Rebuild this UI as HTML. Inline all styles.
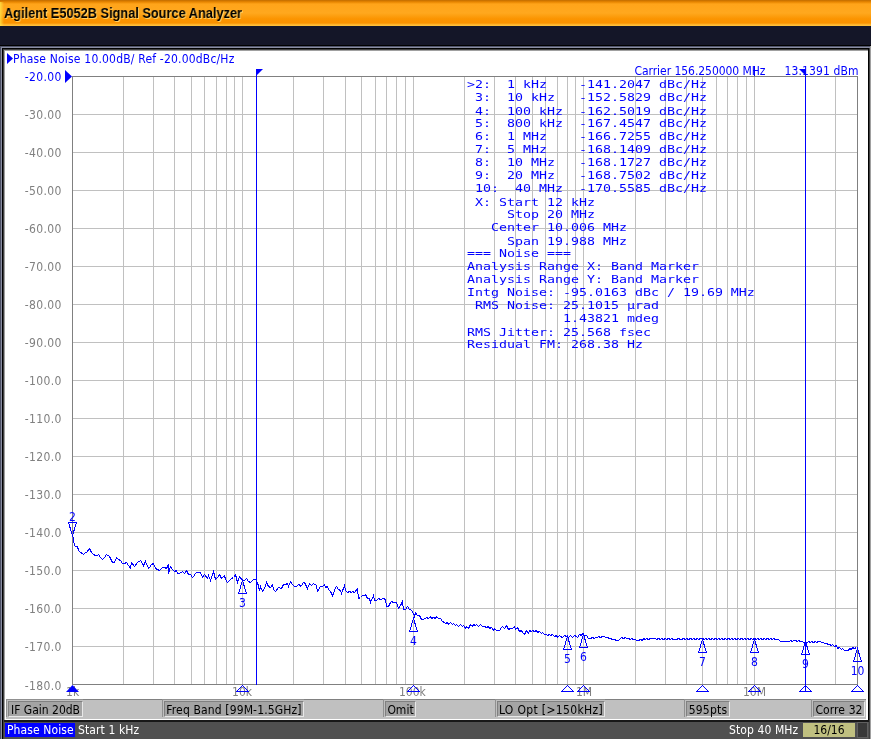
<!DOCTYPE html><html><head><meta charset="utf-8"><title>Agilent E5052B Signal Source Analyzer</title><style>
html,body{margin:0;padding:0}
body{width:871px;height:739px;position:relative;overflow:hidden;background:#fff;font-family:"DejaVu Sans Condensed","Liberation Sans",sans-serif;font-size:12px}
.a{position:absolute}
.g{will-change:transform}
#title{left:0;top:0;width:871px;height:26px;background:linear-gradient(to bottom,#c06c00 0px,#e88600 2px,#ffa41a 4px,#ffa81e 13px,#fb9400 19px,#fa9200 23px,#ffbe38 25px,#ffbe38 26px)}
#title span{will-change:transform;position:absolute;left:4px;top:5px;font:bold 14px/16px "Liberation Sans",sans-serif;transform:scaleX(0.912);transform-origin:0 0;color:#000;white-space:pre;text-shadow:1px 1px 0 rgba(255,224,128,.8)}
#title i{position:absolute;left:0;top:2px;width:4px;height:24px;background:linear-gradient(to right,rgba(255,226,70,.85),rgba(255,226,70,0))}
#navy{left:0;top:26px;width:871px;height:19px;background:#141628}
.sb{font-size:12px;color:#000;white-space:pre}
.box{position:absolute;top:701px;height:14px;line-height:16px;background:#a4a4a4;border-top:1px solid #808080;border-left:1px solid #808080;border-bottom:1px solid #e8e8e8;border-right:1px solid #e8e8e8;box-shadow:0 0 0 1px #c0c0c0,-1px -1px 0 1px #909090;text-align:center;font-size:12px;white-space:pre}
pre{margin:0;position:absolute;left:467px;top:77.7px;font:13.29px/15.294px "DejaVu Sans Mono","Liberation Mono",monospace;transform:scaleY(0.85);transform-origin:0 0;color:#0000ff;white-space:pre}
text{font-family:"DejaVu Sans Condensed","Liberation Sans",sans-serif;font-size:12px}

</style></head><body>
<div class="a" id="title"><i></i><span>Agilent E5052B Signal Source Analyzer</span></div>
<div class="a" id="navy"></div>
<div class="a" style="left:0px;top:45px;width:871px;height:1px;background:#000"></div>
<div class="a" style="left:0px;top:46px;width:871px;height:1px;background:#50546a"></div>
<div class="a" style="left:0px;top:47px;width:871px;height:1px;background:#8a8ea2"></div>
<div class="a" style="left:0px;top:46px;width:1px;height:693px;background:#4c5064"></div>
<div class="a" style="left:1px;top:47px;width:1px;height:692px;background:#8a8ea2"></div>
<div class="a" style="left:2px;top:48px;width:868px;height:2px;background:#000"></div>
<div class="a" style="left:2px;top:48px;width:2px;height:691px;background:#000"></div>
<div class="a" style="left:3px;top:49px;width:866px;height:1px;background:#404040"></div>
<div class="a" style="left:3px;top:49px;width:1px;height:690px;background:#404040"></div>
<div class="a" style="left:4px;top:50px;width:865px;height:1px;background:#a0a0a0"></div>
<div class="a" style="left:4px;top:50px;width:1px;height:689px;background:#a0a0a0"></div>
<div class="a" style="left:868px;top:48px;width:1px;height:691px;background:#000"></div>
<div class="a" style="left:869px;top:48px;width:1px;height:691px;background:#404040"></div>
<div class="a" style="left:870px;top:46px;width:1px;height:693px;background:#a0a0a0"></div>
<div class="a" style="left:6px;top:699px;width:860px;height:1px;background:#808080"></div>
<div class="a" style="left:6px;top:700px;width:860px;height:19px;background:#c0c0c0"></div>
<div class="a" style="left:4px;top:720px;width:865px;height:2px;background:#181818"></div>
<div class="a" style="left:4px;top:722px;width:865px;height:17px;background:#505050"></div>
<div class="a" style="left:5px;top:723px;width:70px;height:14px;background:#0000ff"></div>
<div class="a g" style="left:7px;top:723px;height:15px;line-height:15px;color:#fff;font-size:12px;white-space:pre;letter-spacing:0.1px">Phase Noise</div>
<div class="a g" style="left:78px;top:723px;height:15px;line-height:15px;color:#fff;font-size:12px;white-space:pre;letter-spacing:0.1px">Start 1 kHz</div>
<div class="a g" style="right:73px;top:723px;height:15px;line-height:15px;color:#fff;font-size:12px;white-space:pre;letter-spacing:0.1px">Stop 40 MHz</div>
<div class="a" style="left:803px;top:723px;width:52px;height:14px;background:#c0c080"></div>
<div class="a g" style="left:803px;width:52px;text-align:center;top:723px;height:15px;line-height:15px;color:#000;font-size:12px;white-space:pre">16/16</div>
<div class="a" style="left:857px;top:722px;width:11px;height:16px;background:#606060"></div>
<div class="a" style="left:858px;top:723px;width:9px;height:14px;background:#383838"></div>
<div class="box" style="left:8px;width:73px"><span class="g" style="display:block;letter-spacing:0px">IF Gain 20dB</span></div>
<div class="box" style="left:164px;width:138px"><span class="g" style="display:block;letter-spacing:0.14px">Freq Band [99M-1.5GHz]</span></div>
<div class="box" style="left:385px;width:29px"><span class="g" style="display:block;letter-spacing:0px">Omit</span></div>
<div class="box" style="left:497px;width:106px"><span class="g" style="display:block;letter-spacing:0.35px">LO Opt [>150kHz]</span></div>
<div class="box" style="left:686px;width:42px"><span class="g" style="display:block;letter-spacing:0.2px">595pts</span></div>
<div class="box" style="left:813px;width:50px"><span class="g" style="display:block;letter-spacing:0.1px">Corre 32</span></div>
<svg class="a" style="left:0;top:0;will-change:transform" width="871" height="739" viewBox="0 0 871 739">
<g shape-rendering="crispEdges">
<rect x="123" y="76" width="1" height="608" fill="#c0c0c0"/>
<rect x="153" y="76" width="1" height="608" fill="#c0c0c0"/>
<rect x="174" y="76" width="1" height="608" fill="#c0c0c0"/>
<rect x="191" y="76" width="1" height="608" fill="#c0c0c0"/>
<rect x="204" y="76" width="1" height="608" fill="#c0c0c0"/>
<rect x="216" y="76" width="1" height="608" fill="#c0c0c0"/>
<rect x="226" y="76" width="1" height="608" fill="#c0c0c0"/>
<rect x="234" y="76" width="1" height="608" fill="#c0c0c0"/>
<rect x="242" y="76" width="1" height="608" fill="#c0c0c0"/>
<rect x="293" y="76" width="1" height="608" fill="#c0c0c0"/>
<rect x="323" y="76" width="1" height="608" fill="#c0c0c0"/>
<rect x="345" y="76" width="1" height="608" fill="#c0c0c0"/>
<rect x="361" y="76" width="1" height="608" fill="#c0c0c0"/>
<rect x="375" y="76" width="1" height="608" fill="#c0c0c0"/>
<rect x="386" y="76" width="1" height="608" fill="#c0c0c0"/>
<rect x="396" y="76" width="1" height="608" fill="#c0c0c0"/>
<rect x="405" y="76" width="1" height="608" fill="#c0c0c0"/>
<rect x="413" y="76" width="1" height="608" fill="#c0c0c0"/>
<rect x="464" y="76" width="1" height="608" fill="#c0c0c0"/>
<rect x="494" y="76" width="1" height="608" fill="#c0c0c0"/>
<rect x="515" y="76" width="1" height="608" fill="#c0c0c0"/>
<rect x="532" y="76" width="1" height="608" fill="#c0c0c0"/>
<rect x="545" y="76" width="1" height="608" fill="#c0c0c0"/>
<rect x="557" y="76" width="1" height="608" fill="#c0c0c0"/>
<rect x="567" y="76" width="1" height="608" fill="#c0c0c0"/>
<rect x="575" y="76" width="1" height="608" fill="#c0c0c0"/>
<rect x="583" y="76" width="1" height="608" fill="#c0c0c0"/>
<rect x="635" y="76" width="1" height="608" fill="#c0c0c0"/>
<rect x="665" y="76" width="1" height="608" fill="#c0c0c0"/>
<rect x="686" y="76" width="1" height="608" fill="#c0c0c0"/>
<rect x="702" y="76" width="1" height="608" fill="#c0c0c0"/>
<rect x="716" y="76" width="1" height="608" fill="#c0c0c0"/>
<rect x="727" y="76" width="1" height="608" fill="#c0c0c0"/>
<rect x="737" y="76" width="1" height="608" fill="#c0c0c0"/>
<rect x="746" y="76" width="1" height="608" fill="#c0c0c0"/>
<rect x="754" y="76" width="1" height="608" fill="#c0c0c0"/>
<rect x="805" y="76" width="1" height="608" fill="#c0c0c0"/>
<rect x="835" y="76" width="1" height="608" fill="#c0c0c0"/>
<rect x="72" y="114" width="785" height="1" fill="#c0c0c0"/>
<rect x="72" y="152" width="785" height="1" fill="#c0c0c0"/>
<rect x="72" y="190" width="785" height="1" fill="#c0c0c0"/>
<rect x="72" y="228" width="785" height="1" fill="#c0c0c0"/>
<rect x="72" y="266" width="785" height="1" fill="#c0c0c0"/>
<rect x="72" y="304" width="785" height="1" fill="#c0c0c0"/>
<rect x="72" y="342" width="785" height="1" fill="#c0c0c0"/>
<rect x="72" y="380" width="785" height="1" fill="#c0c0c0"/>
<rect x="72" y="418" width="785" height="1" fill="#c0c0c0"/>
<rect x="72" y="456" width="785" height="1" fill="#c0c0c0"/>
<rect x="72" y="494" width="785" height="1" fill="#c0c0c0"/>
<rect x="72" y="532" width="785" height="1" fill="#c0c0c0"/>
<rect x="72" y="570" width="785" height="1" fill="#c0c0c0"/>
<rect x="72" y="608" width="785" height="1" fill="#c0c0c0"/>
<rect x="72" y="646" width="785" height="1" fill="#c0c0c0"/>
<rect x="72" y="76" width="1" height="609" fill="#808080"/>
<rect x="857" y="76" width="1" height="609" fill="#808080"/>
<rect x="72" y="76" width="786" height="1" fill="#808080"/>
<rect x="72" y="684" width="786" height="1" fill="#808080"/>
</g>
<text x="61.7" y="81" text-anchor="end" fill="#0000ff" letter-spacing="0.35">-20.00</text>
<text x="61.7" y="119" text-anchor="end" fill="#808080" letter-spacing="0.35">-30.00</text>
<text x="61.7" y="157" text-anchor="end" fill="#808080" letter-spacing="0.35">-40.00</text>
<text x="61.7" y="195" text-anchor="end" fill="#808080" letter-spacing="0.35">-50.00</text>
<text x="61.7" y="233" text-anchor="end" fill="#808080" letter-spacing="0.35">-60.00</text>
<text x="61.7" y="271" text-anchor="end" fill="#808080" letter-spacing="0.35">-70.00</text>
<text x="61.7" y="309" text-anchor="end" fill="#808080" letter-spacing="0.35">-80.00</text>
<text x="61.7" y="347" text-anchor="end" fill="#808080" letter-spacing="0.35">-90.00</text>
<text x="61.7" y="385" text-anchor="end" fill="#808080" letter-spacing="0.35">-100.0</text>
<text x="61.7" y="423" text-anchor="end" fill="#808080" letter-spacing="0.35">-110.0</text>
<text x="61.7" y="461" text-anchor="end" fill="#808080" letter-spacing="0.35">-120.0</text>
<text x="61.7" y="499" text-anchor="end" fill="#808080" letter-spacing="0.35">-130.0</text>
<text x="61.7" y="537" text-anchor="end" fill="#808080" letter-spacing="0.35">-140.0</text>
<text x="61.7" y="575" text-anchor="end" fill="#808080" letter-spacing="0.35">-150.0</text>
<text x="61.7" y="613" text-anchor="end" fill="#808080" letter-spacing="0.35">-160.0</text>
<text x="61.7" y="651" text-anchor="end" fill="#808080" letter-spacing="0.35">-170.0</text>
<text x="61.7" y="690.0" text-anchor="end" fill="#808080" letter-spacing="0.35">-180.0</text>
<text x="72.6" y="696" text-anchor="middle" fill="#808080">1k</text>
<text x="242.1" y="696" text-anchor="middle" fill="#808080">10k</text>
<text x="412.4" y="696" text-anchor="middle" fill="#808080">100k</text>
<text x="584.1" y="696" text-anchor="middle" fill="#808080">1M</text>
<text x="754.5" y="696" text-anchor="middle" fill="#808080">10M</text>
<polygon points="7,53 13,58.5 7,64" fill="#0000ff"/>
<text x="13" y="63" fill="#0000ff" letter-spacing="0.19">Phase Noise 10.00dB/ Ref -20.00dBc/Hz</text>
<polygon points="65,70 72,76.5 65,83" fill="#0000ff"/>
<text x="634.5" y="75" fill="#0000ff" letter-spacing="-0.05">Carrier 156.250000 MHz</text>
<text x="784.6" y="75" fill="#0000ff" letter-spacing="0.1">13.1391 dBm</text>
<g shape-rendering="crispEdges" fill="#0000ff">
<rect x="256" y="69" width="1" height="616"/>
<rect x="805" y="69" width="1" height="623"/>
<rect x="754" y="66" width="1" height="10"/>
</g>
<polygon points="256,69 263,69 256,76" fill="#0000ff"/>
<polygon points="806,69 799,69 806,76" fill="#0000ff"/>
<polyline shape-rendering="crispEdges" fill="none" stroke="#0000ff" stroke-width="1" points="72.5,535.5 72.5,534.5 74.5,545.5 75.5,546.5 77.5,546.5 78.5,550.5 80.5,552.5 82.5,553.5 83.5,554.5 85.5,552.5 86.5,552.5 89.5,548.5 91.5,552.5 93.5,554.5 95.5,555.5 97.5,555.5 98.5,554.5 100.5,557.5 102.5,559.5 104.5,557.5 106.5,554.5 109.5,556.5 112.5,562.5 114.5,562.5 116.5,557.5 118.5,559.5 120.5,560.5 122.5,563.5 124.5,563.5 126.5,562.5 128.5,565.5 130.5,568.5 131.5,562.5 134.5,566.5 137.5,562.5 140.5,560.5 143.5,565.5 145.5,561.5 148.5,568.5 149.5,567.5 151.5,564.5 153.5,563.5 155.5,568.5 157.5,569.5 159.5,570.5 160.5,569.5 162.5,567.5 164.5,567.5 166.5,568.5 168.5,564.5 168.5,573.5 170.5,566.5 172.5,569.5 174.5,571.5 176.5,570.5 177.5,573.5 179.5,573.5 182.5,571.5 184.5,573.5 186.5,570.5 188.5,574.5 190.5,574.5 192.5,577.5 193.5,576.5 195.5,573.5 196.5,572.5 200.5,572.5 202.5,577.5 204.5,574.5 207.5,578.5 208.5,575.5 210.5,580.5 213.5,571.5 215.5,579.5 217.5,577.5 219.5,574.5 221.5,578.5 224.5,575.5 225.5,579.5 227.5,582.5 229.5,580.5 231.5,578.5 233.5,577.5 235.5,574.5 237.5,582.5 239.5,576.5 242.5,580.5 244.5,580.5 246.5,578.5 248.5,581.5 250.5,582.5 253.5,579.5 255.5,579.5 257.5,582.5 259.5,590.5 260.5,586.5 262.5,591.5 264.5,588.5 266.5,582.5 268.5,586.5 270.5,587.5 272.5,584.5 273.5,589.5 275.5,591.5 278.5,587.5 281.5,588.5 283.5,584.5 285.5,584.5 287.5,583.5 288.5,586.5 290.5,581.5 292.5,584.5 294.5,586.5 296.5,586.5 298.5,584.5 299.5,584.5 300.5,586.5 301.5,585.5 303.5,582.5 304.5,582.5 307.5,588.5 309.5,583.5 311.5,585.5 313.5,583.5 316.5,585.5 317.5,591.5 320.5,586.5 322.5,586.5 324.5,584.5 325.5,587.5 327.5,586.5 328.5,589.5 330.5,591.5 332.5,595.5 333.5,593.5 335.5,587.5 336.5,586.5 338.5,589.5 340.5,590.5 341.5,593.5 344.5,585.5 345.5,590.5 347.5,592.5 349.5,591.5 351.5,592.5 352.5,591.5 354.5,592.5 357.5,588.5 358.5,598.5 360.5,597.5 362.5,595.5 364.5,595.5 365.5,594.5 367.5,598.5 369.5,598.5 370.5,602.5 373.5,595.5 374.5,600.5 376.5,600.5 378.5,598.5 380.5,599.5 383.5,598.5 385.5,599.5 386.5,606.5 388.5,606.5 390.5,602.5 391.5,601.5 393.5,602.5 396.5,602.5 398.5,608.5 400.5,605.5 402.5,601.5 403.5,609.5 405.5,609.5 407.5,606.5 409.5,609.5 410.5,609.5 412.5,611.5 414.5,616.5 415.5,612.5 417.5,615.5 419.5,615.5 421.5,619.5 423.5,619.5 426.5,617.5 428.5,618.5 430.5,616.5 431.5,618.5 433.5,617.5 435.5,618.5 436.5,616.5 438.5,618.5 440.5,618.5 442.5,621.5 444.5,622.5 445.5,623.5 447.5,622.5 448.5,624.5 450.5,622.5 452.5,624.5 453.5,623.5 455.5,625.5 456.5,624.5 458.5,626.5 460.5,624.5 462.5,626.5 463.5,625.5 465.5,628.5 466.5,626.5 468.5,628.5 470.5,624.5 472.5,626.5 473.5,624.5 475.5,625.5 476.5,624.5 478.5,626.5 480.5,624.5 482.5,626.5 484.5,626.5 486.5,627.5 488.5,626.5 489.5,628.5 491.5,627.5 493.5,630.5 494.5,628.5 496.5,630.5 498.5,630.5 499.5,630.5 501.5,627.5 502.5,626.5 504.5,628.5 506.5,625.5 508.5,629.5 510.5,628.5 512.5,628.5 514.5,626.5 515.5,629.5 517.5,627.5 519.5,631.5 521.5,630.5 522.5,632.5 524.5,634.5 526.5,630.5 528.5,633.5 529.5,630.5 531.5,631.5 532.5,630.5 534.5,631.5 536.5,630.5 537.5,632.5 539.5,631.5 541.5,633.5 542.5,632.5 544.5,634.5 546.5,634.5 547.5,635.5 549.5,634.5 550.5,635.5 552.5,634.5 554.5,636.5 556.5,635.5 557.5,637.5 559.5,635.5 560.5,636.5 562.5,637.5 564.5,635.5 566.5,636.5 568.5,637.5 570.5,635.5 572.5,637.5 574.5,635.5 576.5,636.5 577.5,637.5 579.5,634.5 581.5,635.5 582.5,633.5 584.5,635.5 586.5,635.5 588.5,638.5 590.5,638.5 592.5,637.5 594.5,638.5 595.5,637.5 597.5,637.5 598.5,636.5 600.5,637.5 602.5,636.5 604.5,636.5 605.5,637.5 607.5,637.5 609.5,638.5 610.5,638.5 612.5,639.5 614.5,639.5 616.5,640.5 618.5,640.5 619.5,639.5 621.5,637.5 623.5,638.5 625.5,637.5 626.5,638.5 628.5,638.5 630.5,639.5 631.5,638.5 633.5,639.5 635.5,639.5 636.5,640.5 638.5,640.5 640.5,639.5 642.5,640.5 643.5,638.5 645.5,639.5 646.5,638.5 648.5,639.5 650.5,638.5 652.5,638.5 653.5,638.5 655.5,638.5 656.5,639.5 658.5,638.5 660.5,639.5 661.5,638.5 663.5,639.5 665.5,638.5 666.5,639.5 668.5,638.5 670.5,639.5 671.5,638.5 673.5,639.5 675.5,639.5 676.5,639.5 678.5,638.5 680.5,639.5 681.5,639.5 683.5,638.5 685.5,639.5 686.5,638.5 688.5,639.5 690.5,638.5 692.5,639.5 693.5,638.5 695.5,639.5 697.5,638.5 698.5,639.5 700.5,638.5 702.5,638.5 704.5,639.5 705.5,638.5 707.5,639.5 708.5,638.5 710.5,639.5 712.5,638.5 713.5,639.5 715.5,638.5 717.5,639.5 718.5,638.5 720.5,639.5 721.5,638.5 723.5,639.5 725.5,638.5 726.5,639.5 728.5,638.5 730.5,639.5 731.5,638.5 733.5,639.5 734.5,638.5 736.5,639.5 738.5,638.5 739.5,639.5 741.5,638.5 743.5,639.5 744.5,638.5 746.5,639.5 747.5,638.5 749.5,639.5 751.5,638.5 752.5,639.5 754.5,638.5 756.5,639.5 757.5,638.5 759.5,639.5 760.5,638.5 762.5,639.5 764.5,638.5 765.5,639.5 767.5,638.5 769.5,639.5 770.5,638.5 772.5,639.5 773.5,638.5 775.5,639.5 777.5,639.5 778.5,639.5 780.5,641.5 782.5,641.5 784.5,641.5 785.5,641.5 787.5,641.5 789.5,641.5 790.5,640.5 792.5,641.5 793.5,640.5 795.5,640.5 797.5,641.5 798.5,640.5 800.5,641.5 802.5,641.5 803.5,642.5 805.5,642.5 807.5,642.5 808.5,641.5 810.5,642.5 811.5,641.5 813.5,642.5 815.5,641.5 816.5,642.5 818.5,641.5 820.5,641.5 821.5,642.5 823.5,642.5 824.5,643.5 826.5,643.5 828.5,644.5 829.5,644.5 831.5,645.5 832.5,644.5 834.5,646.5 836.5,645.5 837.5,648.5 839.5,647.5 841.5,649.5 842.5,648.5 844.5,650.5 846.5,650.5 848.5,650.5 849.5,648.5 851.5,649.5 852.5,647.5 854.5,648.5 856.5,647.5 856.5,647.5"/>
<g fill="none" stroke="#0000ff" stroke-width="1" shape-rendering="crispEdges">
<polygon points="242.5,580.5 246.5,593.5 238.5,593.5"/>
<polygon points="413.5,618.5 417.5,631.5 409.5,631.5"/>
<polygon points="567.5,636.5 571.5,649.5 563.5,649.5"/>
<polygon points="583.5,634.5 587.5,647.5 579.5,647.5"/>
<polygon points="702.5,639.5 706.5,652.5 698.5,652.5"/>
<polygon points="754.5,639.5 758.5,652.5 750.5,652.5"/>
<polygon points="805.5,641.5 809.5,654.5 801.5,654.5"/>
<polygon points="857.5,648.5 861.5,661.5 853.5,661.5"/>
<polygon points="72.5,535.5 76.5,522.5 68.5,522.5"/>
<polygon points="242.5,685.5 248.5,691.5 236.5,691.5"/>
<polygon points="413.5,685.5 419.5,691.5 407.5,691.5"/>
<polygon points="567.5,685.5 573.5,691.5 561.5,691.5"/>
<polygon points="583.5,685.5 589.5,691.5 577.5,691.5"/>
<polygon points="702.5,685.5 708.5,691.5 696.5,691.5"/>
<polygon points="754.5,685.5 760.5,691.5 748.5,691.5"/>
<polygon points="805.5,685.5 811.5,691.5 799.5,691.5"/>
<polygon points="857.5,685.5 863.5,691.5 851.5,691.5"/>
</g>
<polygon points="72.5,685 79,692 66,692" fill="#0000ff"/>
<text x="242.5" y="606.5" text-anchor="middle" fill="#0000ff">3</text>
<text x="413.5" y="644.5" text-anchor="middle" fill="#0000ff">4</text>
<text x="567.5" y="662.5" text-anchor="middle" fill="#0000ff">5</text>
<text x="583.5" y="660.5" text-anchor="middle" fill="#0000ff">6</text>
<text x="702.5" y="665.5" text-anchor="middle" fill="#0000ff">7</text>
<text x="754.5" y="665.5" text-anchor="middle" fill="#0000ff">8</text>
<text x="805.5" y="667.5" text-anchor="middle" fill="#0000ff">9</text>
<text x="857.5" y="674.5" text-anchor="middle" fill="#0000ff">10</text>
<text x="72.5" y="521" text-anchor="middle" fill="#0000ff">2</text>
</svg>
<pre>&gt;2:  1 kHz    -141.2047 dBc/Hz
 3:  10 kHz   -152.5829 dBc/Hz
 4:  100 kHz  -162.5019 dBc/Hz
 5:  800 kHz  -167.4547 dBc/Hz
 6:  1 MHz    -166.7255 dBc/Hz
 7:  5 MHz    -168.1409 dBc/Hz
 8:  10 MHz   -168.1727 dBc/Hz
 9:  20 MHz   -168.7502 dBc/Hz
 10:  40 MHz  -170.5585 dBc/Hz
 X: Start 12 kHz
     Stop 20 MHz
   Center 10.006 MHz
     Span 19.988 MHz
=== Noise ===
Analysis Range X: Band Marker
Analysis Range Y: Band Marker
Intg Noise: -95.0163 dBc / 19.69 MHz
 RMS Noise: 25.1015 µrad
            1.43821 mdeg
RMS Jitter: 25.568 fsec
Residual FM: 268.38 Hz</pre>
</body></html>
